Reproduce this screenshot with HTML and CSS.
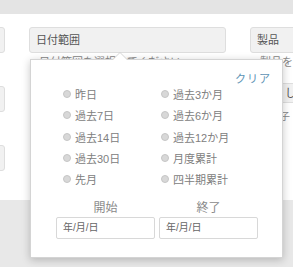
FILE: index.html
```html
<!DOCTYPE html>
<html lang="ja">
<head>
    <meta charset="UTF-8">
    <title>日付範囲</title>
    <link rel="stylesheet" href="styles.css">
</head>
<body>
    <div class="topbar"></div>
    <div class="panel">
        <div class="filters">
            <div class="filter-col">
                <div class="field"><div class="field-box"></div></div>
                <div class="field"><div class="field-box"></div></div>
                <div class="field"><div class="field-box"></div></div>
            </div>
            <div class="filter-col date-col">
                <div class="field">
                    <div class="field-box">日付範囲</div>
                    <div class="field-hint">日付範囲を選択してください</div>
                </div>
            </div>
            <div class="filter-col">
                <div class="field">
                    <div class="field-box">製品</div>
                    <div class="field-hint">製品を</div>
                </div>
                <div class="field"><div class="field-box short">. し</div>
                    <div class="field-hint edge">子</div>
                </div>
            </div>
        </div>
    </div>
    <div class="footer"></div>

    <div class="popup">
        <div class="popup-head">
            <a class="clear-link">クリア</a>
        </div>
        <div class="options">
            <label class="option"><span class="radio"></span>昨日</label>
            <label class="option"><span class="radio"></span>過去3か月</label>
            <label class="option"><span class="radio"></span>過去7日</label>
            <label class="option"><span class="radio"></span>過去6か月</label>
            <label class="option"><span class="radio"></span>過去14日</label>
            <label class="option"><span class="radio"></span>過去12か月</label>
            <label class="option"><span class="radio"></span>過去30日</label>
            <label class="option"><span class="radio"></span>月度累計</label>
            <label class="option"><span class="radio"></span>先月</label>
            <label class="option"><span class="radio"></span>四半期累計</label>
        </div>
        <div class="range">
            <div class="range-field">
                <div class="range-label">開始</div>
                <div class="date-input">年/月/日</div>
            </div>
            <div class="range-field">
                <div class="range-label">終了</div>
                <div class="date-input">年/月/日</div>
            </div>
        </div>
    </div>
</body>
</html>
```
FILE: styles.css
```css
body {
    margin: 0;
    font-family: 'Liberation Sans', 'Noto Sans CJK JP', sans-serif;
    font-size: 11px;
    color: #555;
    background-color: #e9e9e9;
    overflow: hidden;
}

.topbar {
    height: 14px;
    background: #e4e4e4;
}

.panel {
    height: 186px;
    background: #fff;
    overflow: hidden;
}

.filters {
    display: flex;
    gap: 24px;
    margin-left: -170px;
    padding-top: 13px;
}

.filter-col {
    width: 175px;
    display: flex;
    flex-direction: column;
    gap: 33px;
    flex-shrink: 0;
}

.date-col {
    width: 197px;
}

.field-box {
    height: 24px;
    line-height: 24px;
    padding: 0 6px;
    background: #f1f1f1;
    border: 1px solid #dedede;
    border-radius: 3px;
    white-space: nowrap;
}

.field-box.short {
    height: 18px;
    line-height: 18px;
    margin-top: -18px;
    padding-left: 28px;
}

.field-hint {
    margin-top: 3px;
    padding-left: 10px;
    font-size: 11px;
    color: #888;
    white-space: nowrap;
    line-height: 12px;
}

.field-hint.edge {
    margin-top: 8px;
    padding-left: 30px;
    font-size: 10px;
}

.footer {
    height: 67px;
    background: #e8e8e8;
}

.popup {
    position: absolute;
    top: 59px;
    left: 30px;
    width: 253px;
    height: 199px;
    box-sizing: border-box;
    background: #fff;
    border: 1px solid #d4d4d4;
    box-shadow: 0 2px 8px rgba(0, 0, 0, 0.22);
    padding: 10px 24px 0 25px;
}

.popup::before,
.popup::after {
    content: '';
    position: absolute;
    left: 82px;
    width: 0;
    height: 0;
    border-left: 7px solid transparent;
    border-right: 7px solid transparent;
}

.popup::before {
    top: -8px;
    border-bottom: 7px solid #d4d4d4;
}

.popup::after {
    top: -7px;
    border-bottom: 7px solid #fff;
}

.popup-head {
    display: flex;
    justify-content: flex-end;
    margin-right: -13px;
}

.clear-link {
    color: #5e93b5;
    font-size: 11px;
    letter-spacing: 1px;
    cursor: pointer;
}

.options {
    display: grid;
    grid-template-columns: 98px 1fr;
    row-gap: 5.25px;
    margin-top: 0;
    padding-left: 7px;
}

.option {
    display: flex;
    align-items: center;
    height: 16px;
    color: #808080;
}

.radio {
    width: 6px;
    height: 6px;
    border-radius: 50%;
    background: #d8d8d8;
    border: 1px solid #c6c6c6;
    margin-right: 4px;
}

.range {
    display: flex;
    gap: 4px;
    margin-top: 11px;
}

.range-field {
    width: 100px;
}

.range-label {
    text-align: center;
    font-size: 12px;
    color: #8a8a8a;
    margin-bottom: 2px;
}

.date-input {
    height: 20px;
    line-height: 20px;
    border: 1px solid #d8d8d8;
    border-radius: 2px;
    padding-left: 6px;
    font-size: 10px;
    color: #666;
}
```
